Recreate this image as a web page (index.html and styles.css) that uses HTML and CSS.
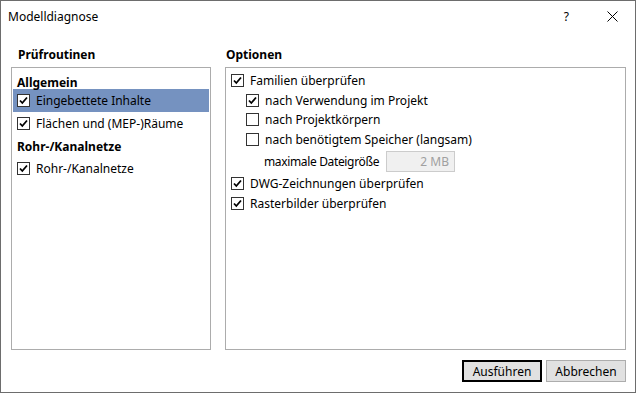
FILE: index.html
```html
<!DOCTYPE html>
<html lang="de">
<head>
    <meta charset="UTF-8">
    <title>Modelldiagnose</title>
    <link rel="stylesheet" href="styles.css">
</head>
<body>
    <div class="window">
        <div class="titlebar">
            <span class="title">Modelldiagnose</span>
            <span class="help">?</span>
            <svg class="close" width="11" height="11" viewBox="0 0 11 11">
                <path d="M0.5 0.5 L10.5 10.5 M10.5 0.5 L0.5 10.5" stroke="#000" stroke-width="1" fill="none"/>
            </svg>
        </div>

        <div class="content">
            <div class="group left">
                <div class="group-title">Prüfroutinen</div>
                <div class="box">
                    <div class="section first">Allgemein</div>
                    <div class="row selected">
                        <svg class="cb" viewBox="0 0 13 13"><rect x="0.5" y="0.5" width="12" height="12" fill="#fff" stroke="#333"/><path d="M3 6.5 L5.3 9 L10 3.5" stroke="#000" stroke-width="1.8" fill="none"/></svg>
                        Eingebettete Inhalte
                    </div>
                    <div class="row">
                        <svg class="cb" viewBox="0 0 13 13"><rect x="0.5" y="0.5" width="12" height="12" fill="#fff" stroke="#333"/><path d="M3 6.5 L5.3 9 L10 3.5" stroke="#000" stroke-width="1.8" fill="none"/></svg>
                        Flächen und (MEP-)Räume
                    </div>
                    <div class="section">Rohr-/Kanalnetze</div>
                    <div class="row">
                        <svg class="cb" viewBox="0 0 13 13"><rect x="0.5" y="0.5" width="12" height="12" fill="#fff" stroke="#333"/><path d="M3 6.5 L5.3 9 L10 3.5" stroke="#000" stroke-width="1.8" fill="none"/></svg>
                        Rohr-/Kanalnetze
                    </div>
                </div>
            </div>

            <div class="group right">
                <div class="group-title">Optionen</div>
                <div class="box options">
                    <div class="opt">
                        <svg class="cb" viewBox="0 0 13 13"><rect x="0.5" y="0.5" width="12" height="12" fill="#fff" stroke="#333"/><path d="M3 6.5 L5.3 9 L10 3.5" stroke="#000" stroke-width="1.8" fill="none"/></svg>
                        Familien überprüfen
                    </div>
                    <div class="opt sub">
                        <svg class="cb" viewBox="0 0 13 13"><rect x="0.5" y="0.5" width="12" height="12" fill="#fff" stroke="#333"/><path d="M3 6.5 L5.3 9 L10 3.5" stroke="#000" stroke-width="1.8" fill="none"/></svg>
                        nach Verwendung im Projekt
                    </div>
                    <div class="opt sub">
                        <svg class="cb" viewBox="0 0 13 13"><rect x="0.5" y="0.5" width="12" height="12" fill="#fff" stroke="#333"/></svg>
                        nach Projektkörpern
                    </div>
                    <div class="opt sub">
                        <svg class="cb" viewBox="0 0 13 13"><rect x="0.5" y="0.5" width="12" height="12" fill="#fff" stroke="#333"/></svg>
                        nach benötigtem Speicher (langsam)
                    </div>
                    <div class="opt size">
                        <span class="size-label">maximale Dateigröße</span>
                        <span class="size-input">2 MB</span>
                    </div>
                    <div class="opt">
                        <svg class="cb" viewBox="0 0 13 13"><rect x="0.5" y="0.5" width="12" height="12" fill="#fff" stroke="#333"/><path d="M3 6.5 L5.3 9 L10 3.5" stroke="#000" stroke-width="1.8" fill="none"/></svg>
                        DWG-Zeichnungen überprüfen
                    </div>
                    <div class="opt">
                        <svg class="cb" viewBox="0 0 13 13"><rect x="0.5" y="0.5" width="12" height="12" fill="#fff" stroke="#333"/><path d="M3 6.5 L5.3 9 L10 3.5" stroke="#000" stroke-width="1.8" fill="none"/></svg>
                        Rasterbilder überprüfen
                    </div>
                </div>
            </div>
        </div>

        <div class="buttons">
            <button class="btn default">Ausführen</button>
            <button class="btn">Abbrechen</button>
        </div>
    </div>
</body>
</html>
```

FILE: styles.css
```css
* {
    margin: 0;
    padding: 0;
    box-sizing: border-box;
}

body {
    font-family: 'Noto Sans', sans-serif;
    font-size: 12px;
    color: #000;
    background: #fff;
}

.window {
    width: 636px;
    height: 393px;
    border: 1px solid #6d6d6d;
    display: flex;
    flex-direction: column;
}

.titlebar {
    height: 30px;
    display: flex;
    align-items: center;
    padding-left: 7px;
}

.title {
    flex: 1;
}

.help {
    margin-right: 38px;
}

.close {
    margin-right: 17px;
}

.content {
    display: flex;
    gap: 14px;
    padding: 15px 9px 0 10px;
    height: 319px;
}

.group {
    display: flex;
    flex-direction: column;
}

.group.left {
    width: 200px;
}

.group.right {
    flex: 1;
}

.group-title {
    font-weight: bold;
    height: 21px;
}

.left .group-title {
    padding-left: 7px;
}

.right .group-title {
    padding-left: 1px;
}

.box {
    flex: 1;
    border: 1px solid #acacac;
    padding: 4px 1px;
}

.section {
    font-weight: bold;
    padding-left: 4px;
    height: 23px;
    padding-top: 2px;
    line-height: 21px;
}

.section.first {
    height: 17px;
    padding-top: 0;
}

.row {
    display: flex;
    align-items: center;
    height: 22px;
    padding-left: 4px;
}

.row.selected {
    height: 23px;
    background: #7592c0;
}

.cb {
    width: 13px;
    height: 13px;
    margin-right: 6px;
    flex-shrink: 0;
}

.options {
    padding: 3px 5px;
}

.opt {
    display: flex;
    align-items: center;
    height: 19.5px;
    white-space: nowrap;
}

.opt.sub {
    padding-left: 15px;
}

.opt.size {
    padding-left: 33px;
    height: 25px;
}

.size-label {
    width: 122px;
    flex-shrink: 0;
    letter-spacing: -0.35px;
}

.size-input {
    width: 69px;
    height: 21px;
    flex-shrink: 0;
    background: #f0f0f0;
    border: 1px solid #ccc;
    color: #a0a0a0;
    text-align: right;
    padding-right: 5px;
    line-height: 19px;
}

.buttons {
    flex: 1;
    display: flex;
    justify-content: flex-end;
    align-items: flex-start;
    gap: 4px;
    padding: 10px 9px 0 0;
}

.btn {
    font-family: inherit;
    font-size: 12px;
    width: 80px;
    height: 22px;
    background: #e1e1e1;
    border: 1px solid #adadad;
    color: #000;
}

.btn.default {
    border: 2px solid #000;
}
```
